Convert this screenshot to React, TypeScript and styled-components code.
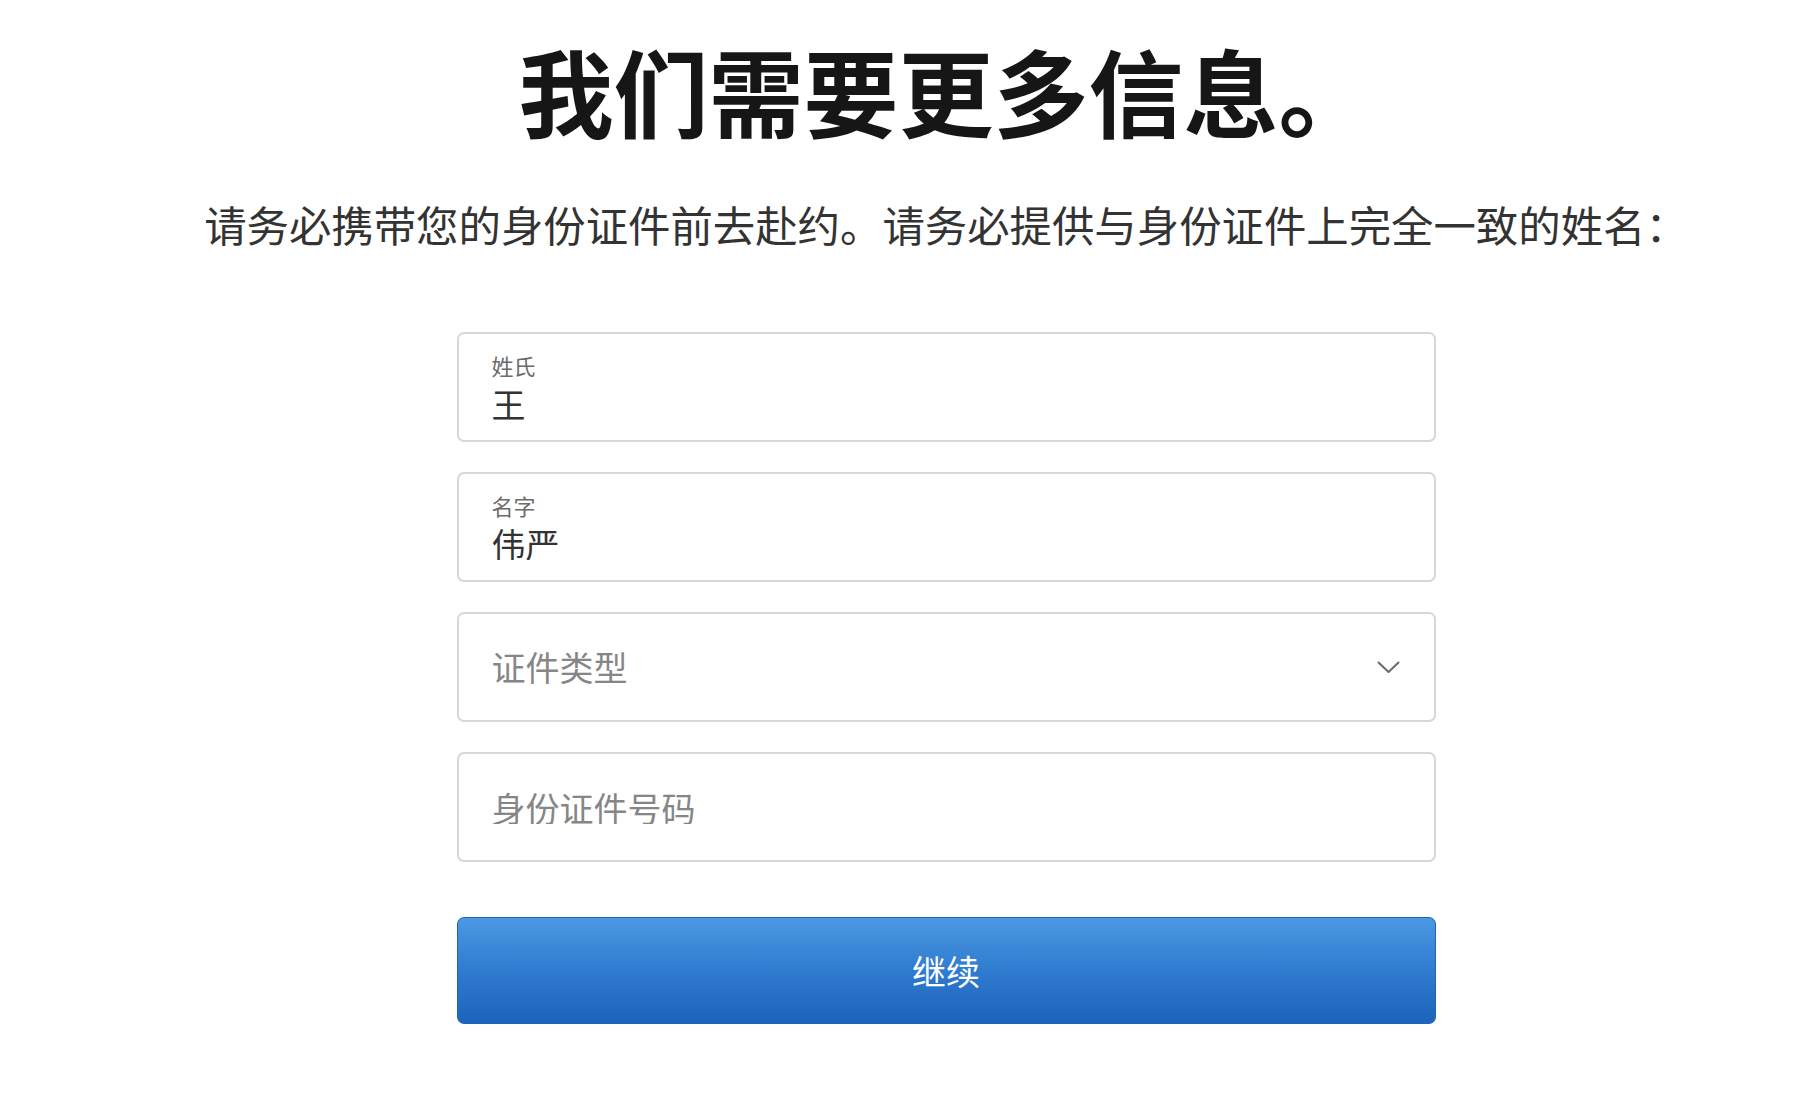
import React from "react";
import styled, { createGlobalStyle } from "styled-components";

const GlobalStyle = createGlobalStyle`
  html, body {
    margin: 0;
    padding: 0;
    background: #ffffff;
  }
  body {
    font-family: "Noto Sans CJK SC", "Noto Sans", sans-serif;
    color: #333333;
  }
  * { box-sizing: border-box; }
`;

const Page = styled.main`
  display: flex;
  flex-direction: column;
  align-items: center;
  padding: 42px 0 60px 78px;
`;

const Title = styled.h1`
  margin: 0;
  font-size: 95px;
  line-height: 1;
  font-weight: 700;
  color: #161616;
  white-space: nowrap;
`;

const Subtitle = styled.p`
  margin: 66px 0 0;
  font-size: 42.4px;
  line-height: 1;
  font-weight: 400;
  color: #333333;
  white-space: nowrap;
`;

const Form = styled.form`
  margin-top: 87px;
  width: 979px;
  display: flex;
  flex-direction: column;
  gap: 30px;
`;

const Field = styled.label<{ $filled?: boolean }>`
  position: relative;
  display: flex;
  flex-direction: column;
  justify-content: ${(p) => (p.$filled ? "flex-start" : "center")};
  height: 110px;
  padding: ${(p) => (p.$filled ? "20px 33px 0" : "0 33px")};
  border: 2px solid #d7d7d7;
  border-radius: 7px;
  background: #ffffff;
  cursor: text;
`;

const FieldLabel = styled.span`
  font-size: 22px;
  line-height: 22px;
  color: #6b6b6b;
`;

const FieldInput = styled.input<{ $filled?: boolean }>`
  margin-top: ${(p) => (p.$filled ? "10px" : "0")};
  padding: 0;
  border: none;
  outline: none;
  background: transparent;
  font-family: "Noto Sans CJK SC", "Noto Sans", sans-serif;
  font-size: 34px;
  line-height: 34px;
  height: 34px;
  color: #333333;
  width: 100%;
  &::placeholder {
    color: #868686;
  }
`;

const SelectBox = styled.div`
  display: flex;
  align-items: center;
  justify-content: space-between;
  height: 110px;
  padding: 0 34px 0 33px;
  border: 2px solid #d7d7d7;
  border-radius: 7px;
  background: #ffffff;
  cursor: pointer;
`;

const SelectText = styled.span`
  font-size: 34px;
  line-height: 34px;
  color: #868686;
`;

const Chevron = styled.svg`
  width: 23px;
  height: 13px;
  flex: none;
`;

const SubmitButton = styled.button`
  margin-top: 25px;
  height: 107px;
  width: 100%;
  border: 1px solid #1e65b7;
  border-radius: 7px;
  background: linear-gradient(to bottom, #4b99e3 0%, #2f7bd0 50%, #1c64ba 100%);
  color: #ffffff;
  font-family: "Noto Sans CJK SC", "Noto Sans", sans-serif;
  font-size: 34px;
  font-weight: 400;
  line-height: 1;
  cursor: pointer;
`;

export default function App() {
  return (
    <>
      <GlobalStyle />
      <Page>
        <Title>我们需要更多信息。</Title>
        <Subtitle>请务必携带您的身份证件前去赴约。请务必提供与身份证件上完全一致的姓名：</Subtitle>
        <Form onSubmit={(e) => e.preventDefault()}>
          <Field $filled>
            <FieldLabel>姓氏</FieldLabel>
            <FieldInput $filled defaultValue="王" />
          </Field>
          <Field $filled>
            <FieldLabel>名字</FieldLabel>
            <FieldInput $filled defaultValue="伟严" />
          </Field>
          <SelectBox>
            <SelectText>证件类型</SelectText>
            <Chevron viewBox="0 0 23 13" fill="none">
              <polyline
                points="1.5,1.5 11.5,11 21.5,1.5"
                stroke="#6a6a6a"
                strokeWidth="2"
                strokeLinecap="round"
                strokeLinejoin="round"
              />
            </Chevron>
          </SelectBox>
          <Field>
            <FieldInput placeholder="身份证件号码" />
          </Field>
          <SubmitButton type="submit">继续</SubmitButton>
        </Form>
      </Page>
    </>
  );
}
